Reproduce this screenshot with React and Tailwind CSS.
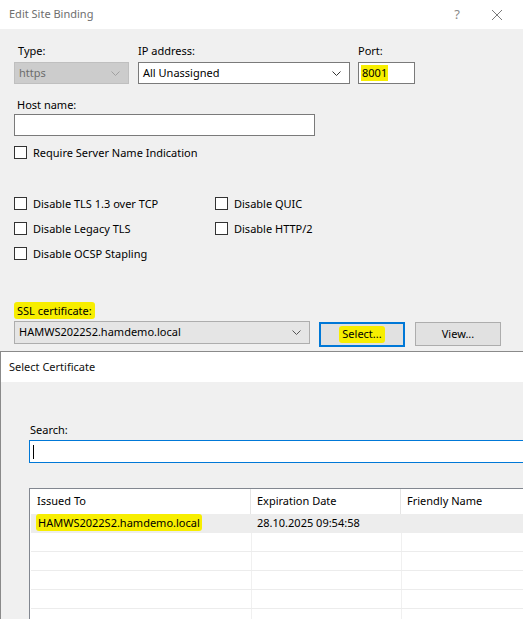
import React from 'react';

const Chevron = ({ color = '#333' }) => (
  <svg width="9" height="5" viewBox="0 0 9 5" fill="none">
    <polyline points="0.5,0.5 4.5,4.5 8.5,0.5" stroke={color} strokeWidth="1" />
  </svg>
);

const Check = ({ label, className = '' }) => (
  <div className={`flex items-center h-[15px] ${className}`}>
    <span className="w-[13px] h-[13px] border border-[#333] bg-white shrink-0" />
    <span className="ml-[6px] leading-none">{label}</span>
  </div>
);

const Mark = ({ children, className = '' }) => (
  <span className={`bg-[#f7ee00] rounded-[3px] ${className}`}>{children}</span>
);

const rows = [0, 1, 2, 3, 4];

export default function App() {
  return (
    <div
      className="w-[523px] h-[619px] overflow-hidden bg-[#f0f0f0] text-[11px] text-black"
      style={{ fontFamily: '"Noto Sans", "Open Sans", sans-serif' }}
    >
      {/* Edit Site Binding window */}
      <div className="h-[351px] flex flex-col">
        <div className="h-[29px] shrink-0 bg-white flex items-center pl-[9px] text-[#6e6e6e]">
          <span>Edit Site Binding</span>
          <span className="ml-auto mr-[31px] text-[13px] text-[#8a8a8a]">?</span>
          <svg width="12" height="12" viewBox="0 0 12 12" className="mr-[20px]">
            <path d="M1 1L11 11M11 1L1 11" stroke="#7a7a7a" strokeWidth="1" />
          </svg>
        </div>

        <div className="flex-1 min-h-0 overflow-hidden pl-[14px] pt-[14px]">
          <div className="flex">
            <div className="w-[115px]">
              <div className="h-[15px] leading-[15px] pl-[4px]">Type:</div>
              <div className="mt-[4px] h-[22px] bg-[#cccccc] border border-[#bfbfbf] flex items-center pl-[4px] pr-[8px] text-[#6d6d6d]">
                <span>https</span>
                <span className="ml-auto"><Chevron color="#a0a0a0" /></span>
              </div>
            </div>
            <div className="w-[212px] ml-[9px]">
              <div className="h-[15px] leading-[15px]">IP address:</div>
              <div className="mt-[4px] h-[22px] bg-white border border-[#7a7a7a] flex items-center pl-[4px] pr-[8px]">
                <span>All Unassigned</span>
                <span className="ml-auto"><Chevron /></span>
              </div>
            </div>
            <div className="w-[57px] ml-[8px]">
              <div className="h-[15px] leading-[15px]">Port:</div>
              <div className="mt-[4px] h-[22px] bg-white border border-[#7a7a7a] flex items-center pl-[2px]">
                <Mark className="px-[1px] rounded-none">8001</Mark>
              </div>
            </div>
          </div>

          <div className="mt-[13px] h-[15px] leading-[15px] pl-[3px]">Host name:</div>
          <div className="mt-[2px] w-[301px] h-[22px] bg-white border border-[#7a7a7a]" />

          <Check label="Require Server Name Indication" className="mt-[9px]" />

          <div className="mt-[36px] flex">
            <div className="w-[201px] flex flex-col gap-[10px]">
              <Check label="Disable TLS 1.3 over TCP" />
              <Check label="Disable Legacy TLS" />
              <Check label="Disable OCSP Stapling" />
            </div>
            <div className="flex flex-col gap-[10px]">
              <Check label="Disable QUIC" />
              <Check label="Disable HTTP/2" />
            </div>
          </div>

          <div className="mt-[42px] h-[15px] leading-[15px]">
            <Mark className="px-[3px] py-[1px]">SSL certificate:</Mark>
          </div>
          <div className="mt-[3px] flex items-start">
            <div className="w-[296px] h-[23px] bg-[#e5e5e5] border border-[#adadad] flex items-center pl-[4px] pr-[8px]">
              <span>HAMWS2022S2.hamdemo.local</span>
              <span className="ml-auto"><Chevron color="#555" /></span>
            </div>
            <div className="ml-[9px] mt-[1px] w-[86px] h-[25px] bg-[#e1e1e1] border-2 border-[#0078d7] flex items-center justify-center">
              <Mark className="px-[3px]">Select...</Mark>
            </div>
            <div className="ml-[10px] mt-[1px] w-[86px] h-[24px] bg-[#e1e1e1] border border-[#adadad] flex items-center justify-center">
              View...
            </div>
          </div>
        </div>
      </div>

      {/* Select Certificate window */}
      <div className="h-[268px] border-t border-l border-[#8a8a8a] flex flex-col">
        <div className="h-[30px] shrink-0 bg-white flex items-center pl-[8px] text-[#111]">Select Certificate</div>
        <div className="flex-1 min-h-0 overflow-hidden pl-[28px] pt-[40px]">
          <div className="h-[15px] leading-[15px] pl-[1px]">Search:</div>
          <div className="mt-[3px] h-[23px] bg-white border border-[#0078d7] border-r-0 flex items-center pl-[3px]">
            <span className="w-[1px] h-[14px] bg-black" />
          </div>

          <div className="mt-[25px] h-[200px] bg-white border-t border-l border-[#828790]">
            <div className="h-[25px] flex items-center">
              <div className="w-[221px] h-full flex items-center pl-[7px] border-r border-[#e5e5e5]">Issued To</div>
              <div className="w-[150px] h-full flex items-center pl-[6px] border-r border-[#e5e5e5]">Expiration Date</div>
              <div className="flex-1 h-full flex items-center pl-[6px]">Friendly Name</div>
            </div>
            <div className="ml-[1px] h-[19px] bg-[#ededed] flex items-center">
              <div className="w-[220px] pl-[5px]">
                <Mark className="px-[2px] py-[1px]">HAMWS2022S2.hamdemo.local</Mark>
              </div>
              <div className="pl-[6px]">28.10.2025 09:54:58</div>
            </div>
            {rows.map((r) => (
              <div key={r} className="ml-[1px] h-[19px] flex border-b border-[#ececec]">
                <div className="w-[221px] border-r border-[#f0f0f0]" />
                <div className="w-[150px] border-r border-[#f0f0f0]" />
                <div className="flex-1" />
              </div>
            ))}
          </div>
        </div>
      </div>
    </div>
  );
}
